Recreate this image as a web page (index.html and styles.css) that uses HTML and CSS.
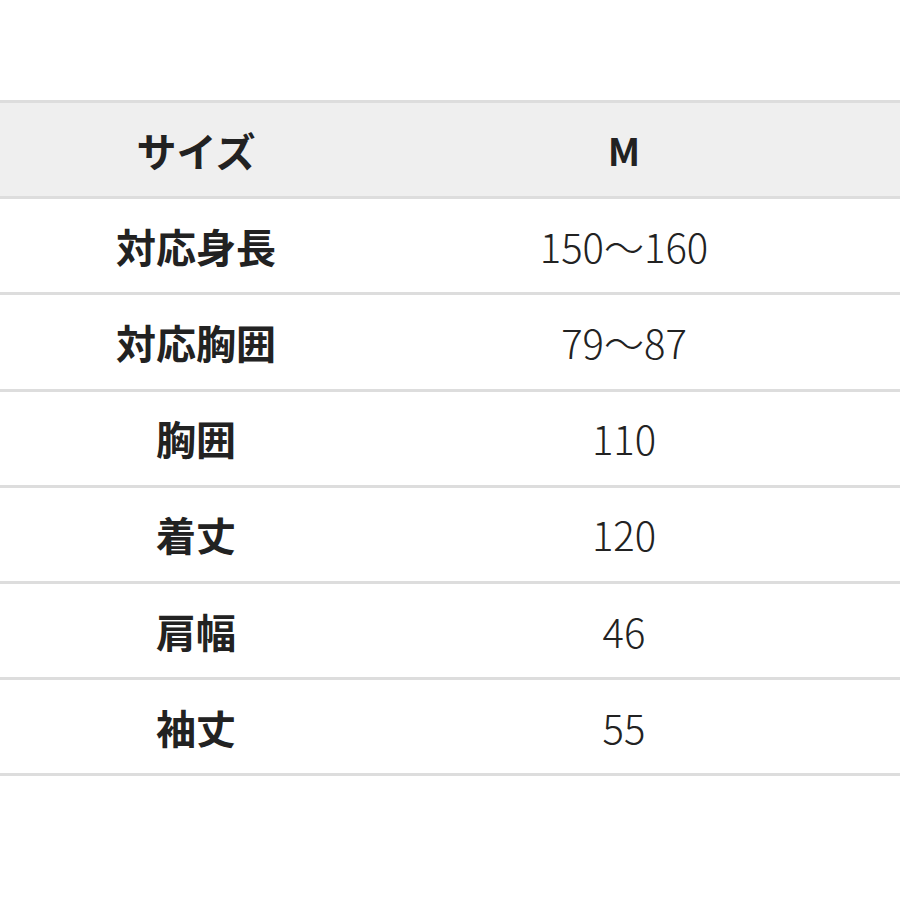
FILE: index.html
```html
<!DOCTYPE html>
<html lang="ja">
<head>
<meta charset="utf-8">
<link rel="stylesheet" href="styles.css">
</head>
<body>
<div class="table">
  <div class="row head"><div class="k">サイズ</div><div class="v">M</div></div>
  <div class="row"><div class="k">対応身長</div><div class="v">150〜160</div></div>
  <div class="row"><div class="k">対応胸囲</div><div class="v">79〜87</div></div>
  <div class="row"><div class="k">胸囲</div><div class="v">110</div></div>
  <div class="row"><div class="k">着丈</div><div class="v">120</div></div>
  <div class="row"><div class="k">肩幅</div><div class="v">46</div></div>
  <div class="row"><div class="k">袖丈</div><div class="v">55</div></div>
</div>
</body>
</html>
```

FILE: styles.css
```css
html, body {
  margin: 0;
  padding: 0;
  background: #ffffff;
}
body {
  font-family: "Noto Sans CJK JP", "Noto Sans", sans-serif;
  color: #222222;
}
.table {
  margin-top: 100px;
  border-top: 3px solid #dddddd;
}
.row {
  display: grid;
  grid-template-columns: 392px 464px;
  height: 93.2px;
  align-items: center;
  border-bottom: 3px solid #dddddd;
}
.row.head {
  background: #efefef;
}
.k {
  text-align: center;
  font-weight: 700;
  font-size: 40px;
  line-height: 1;
}
.v {
  text-align: center;
  font-weight: 300;
  font-size: 40px;
  line-height: 1;
}
.head .v {
  font-weight: 700;
  font-size: 38px;
}
```
